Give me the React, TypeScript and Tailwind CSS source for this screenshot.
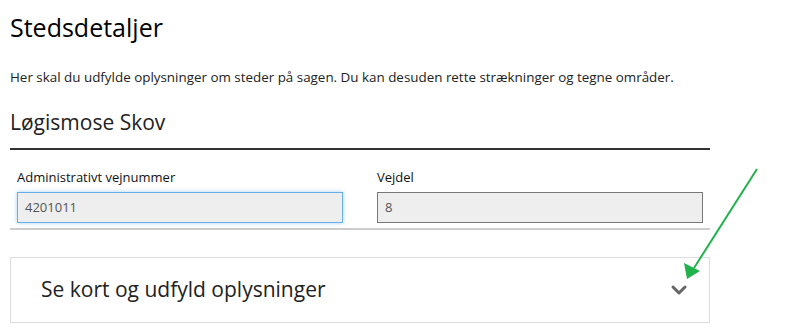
import { ChevronDown } from 'lucide-react';

const font = { fontFamily: '"Open Sans", "Noto Sans", sans-serif' };

const Field = ({ label, value, focused }: { label: string; value: string; focused?: boolean }) => (
  <div className="flex flex-col">
    <label className="text-[13px] leading-[18px] text-[#111] mb-[6px]">{label}</label>
    <div
      className={`h-[31px] flex items-center px-[7px] bg-[#eeeeee] text-[13px] text-[#555] border ${
        focused ? 'border-[#66afe9] shadow-[0_0_4px_rgba(102,175,233,0.6)]' : 'border-[#777]'
      }`}
    >
      {value}
    </div>
  </div>
);

const App = () => {
  return (
    <main className="relative w-[803px] h-[335px] bg-white overflow-hidden" style={font}>
      <div className="w-[710px] pl-[10px] pt-[10px]">
        {/* overskrift */}
        <h1 className="text-[25px] leading-[34px] text-black">Stedsdetaljer</h1>
        <p className="mt-[24px] text-[13.4px] leading-[18px] text-[#222]">
          Her skal du udfylde oplysninger om steder på sagen. Du kan desuden rette strækninger og tegne områder.
        </p>

        <h2 className="mt-[22px] text-[21px] leading-[28px] text-[#222]">Løgismose Skov</h2>
        <div className="mt-[12px] h-[2px] bg-[#333]" />

        {/* felter */}
        <div className="grid grid-cols-2 gap-[34px] px-[7px] mt-[18px]">
          <Field label="Administrativt vejnummer" value="4201011" focused />
          <Field label="Vejdel" value="8" />
        </div>
        <div className="mt-[5px] h-[2px] bg-[#ccc]" />

        {/* kort sektion */}
        <div className="mt-[27px] h-[66px] border border-[#ddd] flex items-center justify-between pl-[30px] pr-[18px]">
          <span className="text-[21px] text-[#222]">Se kort og udfyld oplysninger</span>
          <ChevronDown className="w-[24px] h-[24px] text-[#666]" strokeWidth={3} />
        </div>
      </div>

      {/* grøn pil */}
      <svg className="absolute left-0 top-0 pointer-events-none" width="803" height="335">
        <line x1="757" y1="169" x2="694" y2="268" stroke="#22b24c" strokeWidth="2" />
        <polygon points="687,279 684,263 700,271" fill="#22b24c" />
      </svg>
    </main>
  );
};

export default App;
